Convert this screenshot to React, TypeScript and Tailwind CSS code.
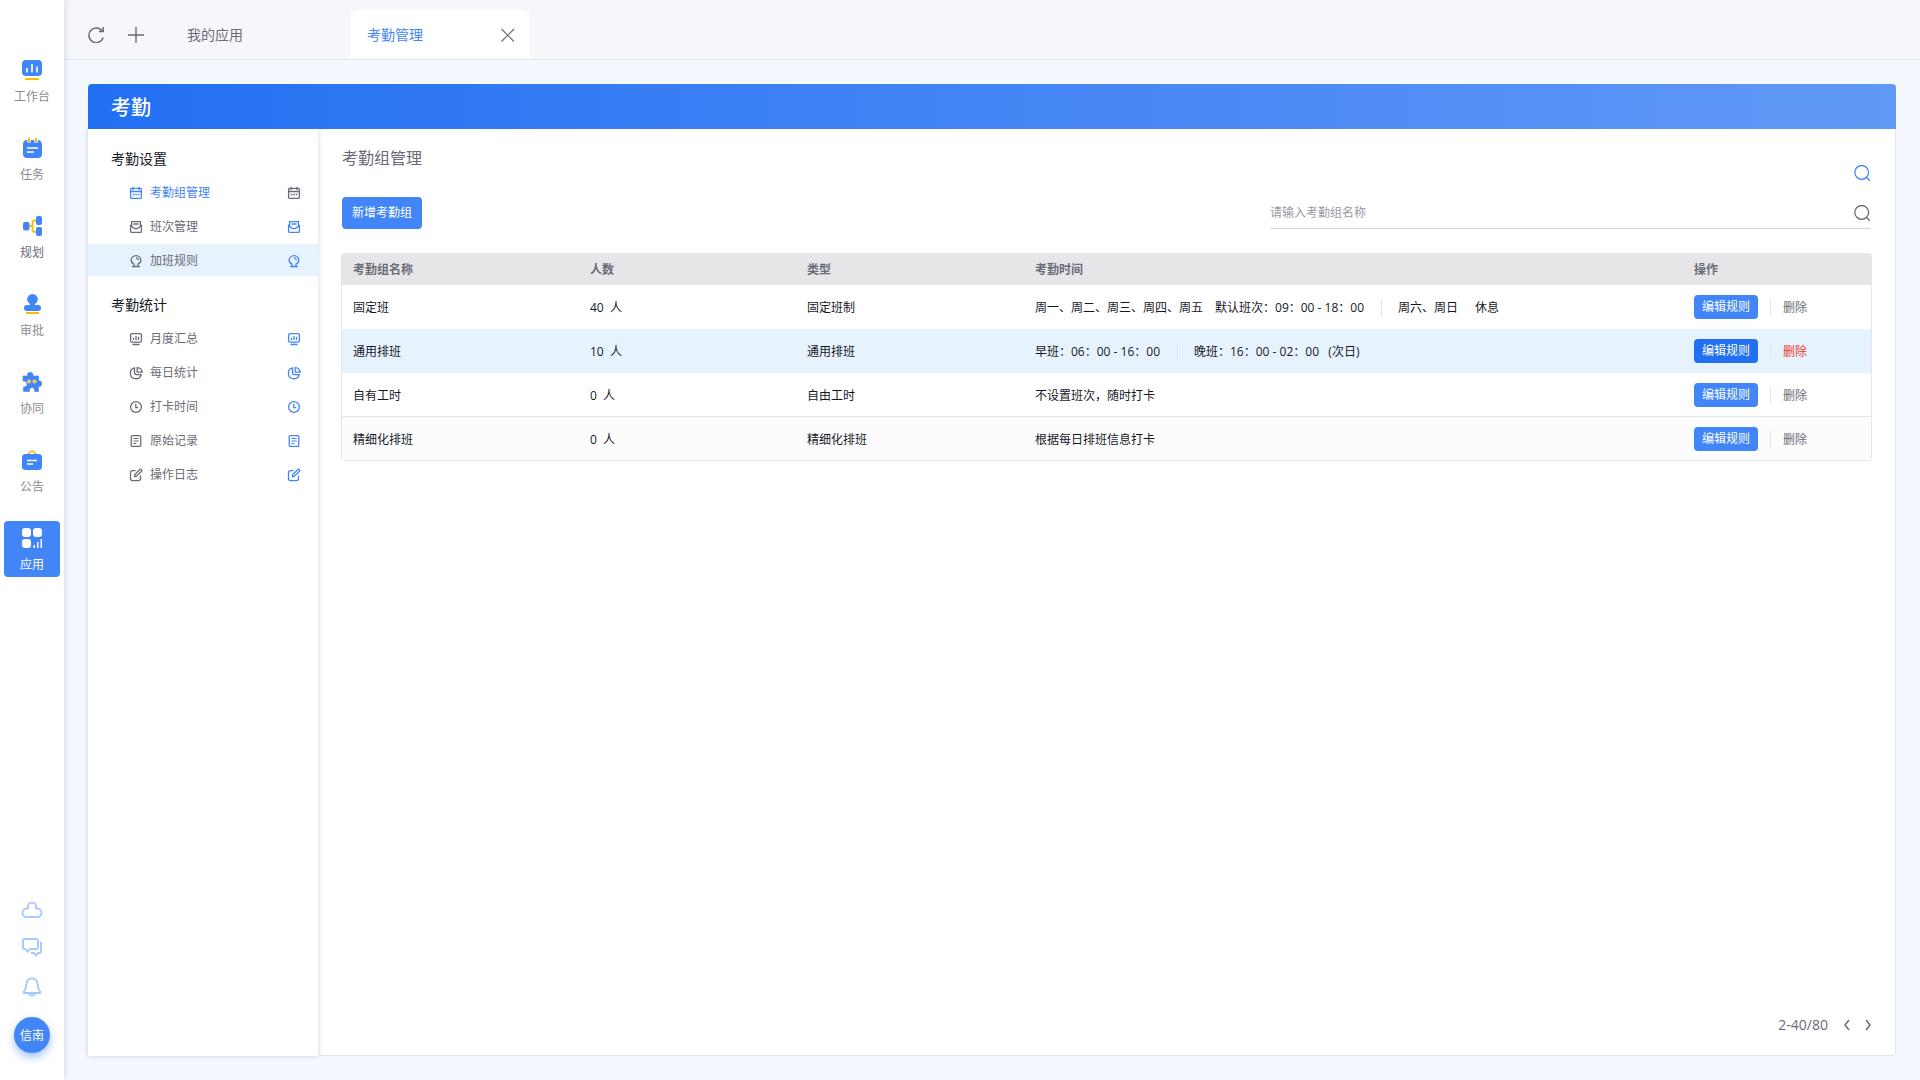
import type { ReactNode } from 'react';
import clsx from 'clsx';

type IconProps = { className?: string };

/* Rail icons, 20x20 */

function WorkbenchIcon() {
  return (
    <svg viewBox="0 0 20 20" className="w-5 h-5" fill="none">
      <rect width="20" height="16" rx="4" fill="#4285f6" />
      <path d="M5 8v4.5M10 4v8.5M15 6.5v6" stroke="#fff" strokeWidth="1.6" />
      <path d="M3 19h14" stroke="#fbbc05" strokeWidth="2" />
    </svg>
  );
}

function TaskIcon() {
  return (
    <svg viewBox="0 0 20 20" className="w-5 h-5" fill="none">
      <path d="M4.500 2h11A4.500 4.500 0 0 1 20 6.500V16a4 4 0 0 1-4 4H5a4 4 0 0 1-4-4V6a4 4 0 0 1 3.500-4Z" fill="#4285f6" />
      <path d="M7 0v4.500M14 0v4.500" stroke="#fff" strokeWidth="3.5" />
      <path d="M7 0v4M14 0v4" stroke="#fbbc05" strokeWidth="2" />
      <path d="M5 10h11M5 14h7" stroke="#fff" strokeWidth="1.7" />
    </svg>
  );
}

function PlanIcon() {
  return (
    <svg viewBox="0 0 20 20" className="w-5 h-5" fill="none">
      <path d="M6 10h4M15 4.500h-2A2.500 2.500 0 0 0 10.500 7v6.500A2.500 2.500 0 0 0 13 16h2" stroke="#fbbc05" strokeWidth="1.8" />
      <rect x="1" y="6" width="6.5" height="8.5" rx="2" fill="#4285f6" />
      <rect x="14" y="0" width="6" height="9" rx="2" fill="#4285f6" />
      <rect x="14" y="11" width="6" height="9" rx="2" fill="#4285f6" />
    </svg>
  );
}

function ApproveIcon() {
  return (
    <svg viewBox="0 0 20 20" className="w-5 h-5" fill="none">
      <circle cx="10.5" cy="5.3" r="5.3" fill="#4285f6" />
      <path d="M8 8h5v3h3a3 3 0 0 1 0 6H5a3 3 0 0 1 0-6h3Z" fill="#4285f6" />
      <path d="M4 19h13" stroke="#fbbc05" strokeWidth="2" />
    </svg>
  );
}

function TeamworkIcon() {
  return (
    <svg viewBox="0 0 20 20" className="w-5 h-5" fill="none">
      <path
        d="M1 4h4.500C5 1.500 6.300.300 8.200.300S11.500 1.500 11 4h5.500v5c1.700-.5 3.300.5 3.300 2.500s-1.600 3.500-3.300 3V19.500h-4c.4-2.500-.8-4-2.500-4s-2.900 1.500-2.500 4h-6V15c2.500.2 3.500-1.200 3.500-3s-1.500-3.200-4-3Z"
        fill="#4285f6"
        stroke="#4285f6"
        strokeWidth=".6"
        strokeLinejoin="round"
      />
      <circle cx="7" cy="9.500" r="2" fill="#f8d98a" />
      <circle cx="12.5" cy="9.500" r="2" fill="#f8d98a" />
      <circle cx="7" cy="9.500" r="1.2" fill="#fbbc05" />
      <circle cx="12.5" cy="9.500" r="1.2" fill="#fbbc05" />
    </svg>
  );
}

function NoticeIcon() {
  return (
    <svg viewBox="0 0 20 20" className="w-5 h-5" fill="none">
      <path d="m5 5 4-3.500a1.600 1.600 0 0 1 2.200 0L15 5" stroke="#fbbc05" strokeWidth="1.6" />
      <rect y="4" width="20" height="16" rx="3.5" fill="#4285f6" />
      <path d="M5 10.500h10M5 14h6" stroke="#fff" strokeWidth="1.4" />
    </svg>
  );
}

function AppsIcon() {
  return (
    <svg viewBox="0 0 20 20" className="w-5 h-5" fill="#fff">
      <rect width="9" height="9" rx="3" />
      <rect x="11" width="9" height="9" rx="3" />
      <rect y="11" width="9" height="9" rx="3" />
      <path d="M11.500 17h1.500v3h-1.500ZM15 14h1.500v6H15ZM18.500 11H20v9h-1.500Z" />
    </svg>
  );
}

function CloudIcon() {
  return (
    <svg viewBox="0 0 24 24" className="w-6 h-6" fill="none" stroke="#a9c8fb" strokeWidth="1.9">
      <path d="M8 13.500V11.600a4 4 0 0 1 8 0v1.900h1.300a4 4 0 0 1 0 8.500H6.700a4 4 0 0 1 0-8.500Z" />
    </svg>
  );
}

function ChatIcon() {
  return (
    <svg viewBox="0 0 24 24" className="w-6 h-6" fill="none" stroke="#a9c8fb" strokeWidth="1.9">
      <path d="M4.500 4h12A1.500 1.500 0 0 1 18 5.500v7a1.500 1.500 0 0 1-1.500 1.500H10l-2.500 2.500L5.500 14h-1A1.500 1.500 0 0 1 3 12.500v-7A1.500 1.500 0 0 1 4.500 4Z" />
      <path d="M21 7v9.500a1.500 1.500 0 0 1-1.500 1.500H18l-1.500 2.500L14 18h-3" />
    </svg>
  );
}

function BellIcon() {
  return (
    <svg viewBox="0 0 24 24" className="w-6 h-6" fill="none" stroke="#a9c8fb" strokeWidth="1.9">
      <path d="M12 3.500c-3.700 0-5.500 2.700-5.700 6-.2 3.500-.8 5.200-2.300 7v1.500h16v-1.500c-1.500-1.800-2.100-3.500-2.300-7-.2-3.300-2-6-5.700-6Z" />
      <path d="M8.500 18c.7 1.900 1.900 2.700 3.500 2.700s2.800-.8 3.500-2.700" />
    </svg>
  );
}

/* Top bar icons, 16x16 */

function RefreshIcon() {
  return (
    <svg viewBox="0 0 16 16" className="w-4 h-4" fill="none" stroke="currentColor" strokeWidth="1.5">
      <path d="M15.200 10.500A7.300 7.300 0 1 1 14.300 4.300" />
      <path d="M15.200 0v4.500H11" />
    </svg>
  );
}

function PlusIcon() {
  return (
    <svg viewBox="0 0 16 16" className="w-4 h-4" fill="none" stroke="currentColor" strokeWidth="1.4">
      <path d="M8 0v16M0 8h16" />
    </svg>
  );
}

function CloseIcon() {
  return (
    <svg viewBox="0 0 16 16" className="w-4 h-4" fill="none" stroke="currentColor" strokeWidth="1.2">
      <path d="m1.500 2 12.500 12.500M14 2 1.500 14.500" />
    </svg>
  );
}

function SearchIcon() {
  return (
    <svg viewBox="0 0 16 16" className="w-4 h-4" fill="none" stroke="currentColor" strokeWidth="1.3">
      <circle cx="7.7" cy="7.4" r="6.900" />
      <path d="M12.200 12.300 16 15.700" />
    </svg>
  );
}

/* Menu icons, 14x14 */

function MenuSvg({ className, children }: { className?: string; children: ReactNode }) {
  return (
    <svg viewBox="0 0 14 14" className={clsx('w-3.5 h-3.5 shrink-0', className)} fill="none" stroke="currentColor" strokeWidth="1.3">
      {children}
    </svg>
  );
}

function CalendarIcon({ className }: IconProps) {
  return (
    <MenuSvg className={className}>
      <rect x="1.6" y="2.4" width="10.8" height="10" rx="1.2" />
      <path d="M1.600 5.500h10.800M4 1v3M10 1v3" />
      <path d="M3.800 8.500h6.600" strokeDasharray="1.600 .9" />
    </MenuSvg>
  );
}

function ShiftIcon({ className }: IconProps) {
  return (
    <MenuSvg className={className}>
      <path d="M2.600 6.500V1.600h8.800v4.900M4.500 4h5" />
      <path d="M1.600 5.500v5.900a1 1 0 0 0 1 1h8.800a1 1 0 0 0 1-1V5.500L8.500 8.600h-3Z" />
    </MenuSvg>
  );
}

function BulbIcon({ className }: IconProps) {
  return (
    <MenuSvg className={className}>
      <path d="M5 10.200C3.200 9.500 2.200 8 2.200 6.300a4.800 4.700 0 0 1 9.600 0c0 1.700-1 3.200-2.800 3.900v2.200H5Z" />
      <path d="M7 3.900c1.400.1 2.200.9 2.400 2.300M3 12.700h8" />
    </MenuSvg>
  );
}

function MonitorIcon({ className }: IconProps) {
  return (
    <MenuSvg className={className}>
      <rect x="1.600" y="1.600" width="10.800" height="8.600" rx="1.500" />
      <path d="M4.500 5.800V8M7 4v4M9.500 4.800V8M3.500 12.500h7" />
    </MenuSvg>
  );
}

function PieIcon({ className }: IconProps) {
  return (
    <MenuSvg className={className}>
      <path d="M5.500 1.900A5.500 5.500 0 1 0 12.200 8.600H7.500a2 2 0 0 1-2-2Z" />
      <path d="M8.200 1.600c2.800.2 4.700 1.900 5 4.500h-5Z" />
    </MenuSvg>
  );
}

function ClockIcon({ className }: IconProps) {
  return (
    <MenuSvg className={className}>
      <circle cx="7" cy="7" r="5.400" />
      <path d="M6.800 3.800v3.800h2.400" />
    </MenuSvg>
  );
}

function RecordIcon({ className }: IconProps) {
  return (
    <MenuSvg className={className}>
      <rect x="2.200" y="1.600" width="9.600" height="10.800" rx="1.200" />
      <path d="M4.300 4.500h5.400M4.300 7h5.400M4.300 9.500h3" strokeWidth="1" />
    </MenuSvg>
  );
}

function LogIcon({ className }: IconProps) {
  return (
    <MenuSvg className={className}>
      <path d="M6.500 2.600h-3a2 2 0 0 0-2 2v6a2 2 0 0 0 2 2h6a2 2 0 0 0 2-2v-3" />
      <path d="m5.500 8.700.3-2.200 5-5a1 1 0 0 1 1.500 0l.2.200a1 1 0 0 1 0 1.500l-5 5Z" />
    </MenuSvg>
  );
}

const railItems = [
  { label: '工作台', Icon: WorkbenchIcon },
  { label: '任务', Icon: TaskIcon },
  { label: '规划', Icon: PlanIcon, dark: true },
  { label: '审批', Icon: ApproveIcon },
  { label: '协同', Icon: TeamworkIcon },
  { label: '公告', Icon: NoticeIcon },
  { label: '应用', Icon: AppsIcon, active: true },
];

const menu = [
  {
    title: '考勤设置',
    items: [
      { label: '考勤组管理', Icon: CalendarIcon, active: true },
      { label: '班次管理', Icon: ShiftIcon },
      { label: '加班规则', Icon: BulbIcon, hovered: true },
    ],
  },
  {
    title: '考勤统计',
    items: [
      { label: '月度汇总', Icon: MonitorIcon },
      { label: '每日统计', Icon: PieIcon },
      { label: '打卡时间', Icon: ClockIcon },
      { label: '原始记录', Icon: RecordIcon },
      { label: '操作日志', Icon: LogIcon },
    ],
  },
];

const groups = [
  {
    name: '固定班',
    count: 40,
    type: '固定班制',
    times: [
      ['周一、周二、周三、周四、周五', '默认班次：09：00 - 18：00'],
      ['周六、周日', '休息'],
    ],
  },
  {
    name: '通用排班',
    count: 10,
    type: '通用排班',
    times: [['早班：06：00 - 16：00'], ['晚班：16：00 - 02：00   (次日)']],
    hovered: true,
  },
  { name: '自有工时', count: 0, type: '自由工时', times: [['不设置班次，随时打卡']], line: true },
  { name: '精细化排班', count: 0, type: '精细化排班', times: [['根据每日排班信息打卡']], line: true, muted: true },
];

function Rail() {
  return (
    <aside className="relative z-10 w-16 shrink-0 flex flex-col items-center bg-white pt-[53px] pb-[27px] shadow-[0_0_8px_rgba(60,80,140,0.2)]">
      <nav className="flex flex-col gap-[22px]">
        {railItems.map(({ label, Icon, active, dark }) => (
          <a
            key={label}
            href="#"
            className={clsx(
              'w-14 h-14 pt-[7px] flex flex-col items-center gap-[9px] rounded text-xs leading-4',
              active ? 'bg-[#4285f6] text-white' : dark ? 'text-[#6b6b76]' : 'text-[#8c8c94]',
            )}
          >
            <Icon />
            {label}
          </a>
        ))}
      </nav>
      <div className="mt-auto flex flex-col items-center gap-4">
        <button type="button" aria-label="云盘"><CloudIcon /></button>
        <button type="button" aria-label="消息"><ChatIcon /></button>
        <button type="button" aria-label="通知"><BellIcon /></button>
      </div>
      <button type="button" className="mt-[18px] w-9 h-9 pt-0.5 rounded-full bg-[#4285f6] text-white text-xs shadow-[0_4px_8px_rgba(66,133,246,0.5)]">
        信南
      </button>
    </aside>
  );
}

function TabBar() {
  return (
    <header className="h-[60px] flex items-end border-b border-[#e4e5ea] bg-[#f5f7fb] pl-6 text-sm text-[#6b6b76]">
      <div className="h-[49px] flex items-center gap-6">
        <button type="button" aria-label="刷新"><RefreshIcon /></button>
        <button type="button" aria-label="新建标签"><PlusIcon /></button>
      </div>
      <a href="#" className="ml-[26px] w-[180px] h-[49px] flex items-center pl-[17px]">我的应用</a>
      <div className="w-[180px] h-[49px] flex items-center justify-between rounded-t-lg bg-white pl-[17px] pr-3.5">
        <a href="#" className="text-[#4285f6]">考勤管理</a>
        <button type="button" aria-label="关闭"><CloseIcon /></button>
      </div>
    </header>
  );
}

function SideMenu() {
  return (
    <nav className="w-[230px] shrink-0 flex flex-col gap-3 bg-white pt-[13px] shadow-[0_0_5px_rgba(60,70,110,0.25)]">
      {menu.map((section) => (
        <section key={section.title} className="flex flex-col gap-0.5">
          <h2 className="h-8 flex items-center pt-0.5 pl-[23px] text-sm text-[#17181f]">{section.title}</h2>
          {section.items.map(({ label, Icon, ...item }) => {
            const active = 'active' in item;
            return (
              <a
                key={label}
                href="#"
                className={clsx(
                  'h-8 flex items-center gap-[7px] pt-0.5 pl-[41px] pr-[17px] text-xs',
                  active ? 'text-[#4285f6]' : 'text-[#6b6b76]',
                  'hovered' in item && 'bg-[#e7f2ff]',
                )}
              >
                <Icon />
                <span className="flex-1">{label}</span>
                <Icon className={active ? 'text-[#6b6b76]' : 'text-[#4285f6]'} />
              </a>
            );
          })}
        </section>
      ))}
    </nav>
  );
}

function Divider() {
  return <span className="w-px h-4 bg-[#e4e4e7]" />;
}

function GroupTable() {
  return (
    <div className="mt-6 rounded border-x border-[#e6e6e9] overflow-hidden">
      <table className="w-full table-fixed border-separate border-spacing-0 text-left text-xs text-[#17181f]">
        <colgroup>
          <col className="w-[237px]" />
          <col className="w-[217px]" />
          <col className="w-[228px]" />
          <col />
          <col className="w-[188px]" />
        </colgroup>
        <thead>
          <tr className="h-8 bg-[#e6e6e9] text-[#6b6b76]">
            <th className="px-[11px] pt-0.5">考勤组名称</th>
            <th className="px-[11px] pt-0.5">人数</th>
            <th className="px-[11px] pt-0.5">类型</th>
            <th className="px-[11px] pt-0.5">考勤时间</th>
            <th className="px-[11px] pt-0.5">操作</th>
          </tr>
        </thead>
        <tbody>
          {groups.map((g) => (
            <tr
              key={g.name}
              className={clsx(
                'h-11',
                g.hovered && 'bg-[#e7f2ff]',
                g.muted && 'bg-[#fcfcfd]',
                g.line && '[&>td]:border-b [&>td]:border-[#e6e6e9]',
              )}
            >
              <td className="px-[11px] pt-0.5">{g.name}</td>
              <td className="px-[11px] pt-0.5 whitespace-pre">{g.count}  人</td>
              <td className="px-[11px] pt-0.5">{g.type}</td>
              <td className="px-[11px] pt-0.5">
                <div className="flex items-center gap-[17px] whitespace-pre">
                  {g.times.map((parts, i) => (
                    <div key={i} className="flex items-center gap-4">
                      {i > 0 && <Divider />}
                      <div className={clsx('flex', i > 0 ? 'gap-[17px]' : 'gap-3')}>
                        {parts.map((p) => (
                          <span key={p}>{p}</span>
                        ))}
                      </div>
                    </div>
                  ))}
                </div>
              </td>
              <td className="px-[11px]">
                <div className="flex items-center gap-3">
                  <button type="button" className={clsx('w-16 h-6 rounded text-white', g.hovered ? 'bg-[#226ff2]' : 'bg-[#4285f6]')}>
                    编辑规则
                  </button>
                  <Divider />
                  <button type="button" className={clsx('pt-0.5', g.hovered ? 'text-[#f03a2e]' : 'text-[#6b6b76]')}>
                    删除
                  </button>
                </div>
              </td>
            </tr>
          ))}
        </tbody>
      </table>
    </div>
  );
}

function Content() {
  return (
    <section className="flex-1 min-w-0 flex flex-col rounded-br border-r border-b border-[#e4e5ea] px-[23px]">
      <div className="h-[68px] flex justify-between pl-px pr-0.5">
        <h2 className="pt-[17px] text-base leading-6 text-[#6b6b76]">考勤组管理</h2>
        <button type="button" aria-label="展开搜索" className="self-end mb-4 text-[#4285f6]">
          <SearchIcon />
        </button>
      </div>
      <div className="flex items-center justify-between pl-px pr-0.5">
        <button type="button" className="w-20 h-8 rounded bg-[#4285f6] text-white text-xs">新增考勤组</button>
        <form className="w-[600px] h-8 flex items-center border-b border-[#d0d0d5]">
          <input
            type="text"
            aria-label="考勤组名称"
            placeholder="请输入考勤组名称"
            className="flex-1 text-xs outline-none placeholder:text-[#9a9aa2]"
          />
          <button type="button" aria-label="搜索" className="text-[#6b6b76]">
            <SearchIcon />
          </button>
        </form>
      </div>
      <GroupTable />
      <div className="mt-auto mb-5 flex items-center justify-end text-sm text-[#6b6b76]">
        <span className="mr-[15px]">2-40/80</span>
        <button type="button" aria-label="上一页" className="mr-[13px]">
          <svg viewBox="0 0 8 16" className="w-2 h-4" fill="none" stroke="currentColor" strokeWidth="1.5">
            <path d="M6 3 2 8l4 5" />
          </svg>
        </button>
        <button type="button" aria-label="下一页">
          <svg viewBox="0 0 8 16" className="w-2 h-4" fill="none" stroke="currentColor" strokeWidth="1.5">
            <path d="m2 3 4 5-4 5" />
          </svg>
        </button>
      </div>
    </section>
  );
}

export default function App() {
  return (
    <div className="min-h-screen flex bg-[#f4f8ff] font-['Open_Sans','Noto_Sans_CJK_SC',sans-serif]">
      <Rail />
      <div className="flex-1 min-w-0 flex flex-col">
        <TabBar />
        <main className="flex-1 m-6 flex flex-col rounded bg-white">
          <div className="relative h-[45px] flex items-center rounded-t bg-linear-to-r from-[#226ff2] to-[#6099f6] pt-0.5 pl-[23px]">
            <h1 className="text-xl font-medium text-white">考勤</h1>
          </div>
          <div className="flex-1 flex">
            <SideMenu />
            <Content />
          </div>
        </main>
      </div>
    </div>
  );
}
